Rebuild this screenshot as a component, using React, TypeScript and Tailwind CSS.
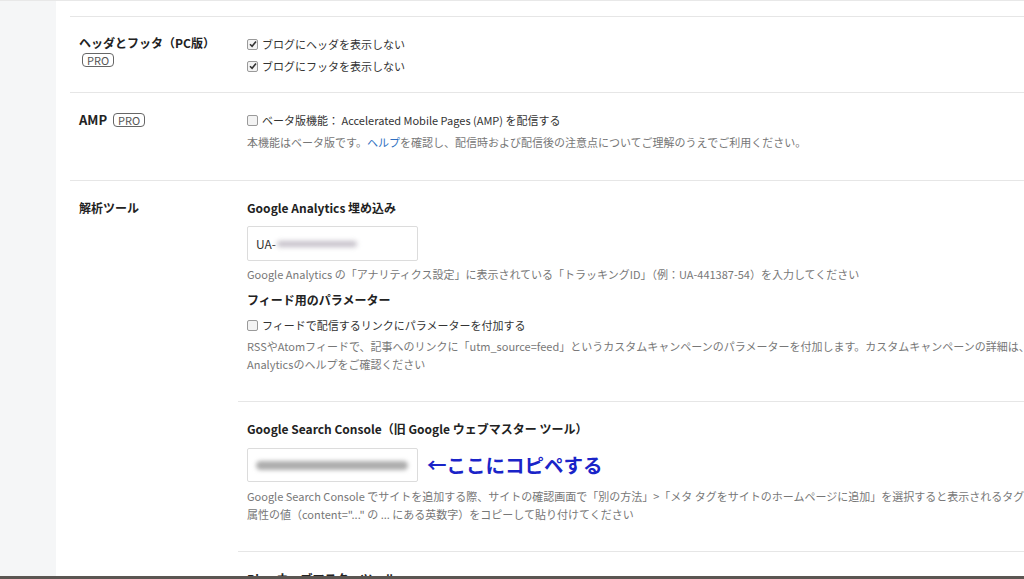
import type { ReactNode } from "react";

const font = { fontFamily: '"Noto Sans CJK JP", "Noto Sans", sans-serif' };

function Check({ checked }: { checked?: boolean }) {
  return (
    <span className="inline-flex w-[11px] h-[11px] mr-[4px] border border-[#9a9a9a] bg-[#f3f3f3] rounded-[2px] items-center justify-center shrink-0">
      {checked && (
        <svg width="8" height="8" viewBox="0 0 8 8">
          <path d="M1 4.2 L3.1 6.3 L7 1.6" fill="none" stroke="#333" strokeWidth="1.6" />
        </svg>
      )}
    </span>
  );
}

function Pro() {
  return (
    <span className="inline-block border border-[#666] rounded-[4px] text-[11px] leading-[12px] text-[#555] px-[4px] font-normal">
      PRO
    </span>
  );
}

function CheckRow({ checked, children }: { checked?: boolean; children: ReactNode }) {
  return (
    <div className="flex items-center h-[22px] text-[11px] text-[#333] whitespace-nowrap">
      <Check checked={checked} />
      <span>{children}</span>
    </div>
  );
}

function Row({ label, children, className = "" }: { label: ReactNode; children: ReactNode; className?: string }) {
  return (
    <div className={`flex border-t border-[#e6e6e6] ${className}`}>
      <div className="w-[168px] shrink-0 pl-[9px] pt-[16px] text-[12px] font-bold text-[#222]">{label}</div>
      <div className="flex-1 min-w-0">{children}</div>
    </div>
  );
}

export default function App() {
  return (
    <div className="w-[1024px] h-[579px] overflow-hidden relative flex bg-white" style={font}>
      <div className="w-[56px] shrink-0 bg-[#f5f6f7] border-t border-[#e8e8e8]" />
      <div className="flex-1 min-w-0 border-t border-[#e8e8e8] pl-[14px]">
        <div className="h-[15px]" />

        <Row
          label={
            <>
              <div className="leading-[20px]">ヘッダとフッタ（PC版）</div>
              <div className="pl-[3px] leading-[14px]">
                <Pro />
              </div>
            </>
          }
          className="h-[76px]"
        >
          <div className="pl-[9px] pt-[16px]">
            <CheckRow checked>ブログにヘッダを表示しない</CheckRow>
            <CheckRow checked>ブログにフッタを表示しない</CheckRow>
          </div>
        </Row>

        <Row
          label={
            <div className="flex items-center gap-[6px] leading-[22px]">
              <span className="text-[13px]">AMP</span>
              <Pro />
            </div>
          }
          className="h-[88px]"
        >
          <div className="pl-[9px] pt-[16px]">
            <CheckRow>ベータ版機能： Accelerated Mobile Pages (AMP) を配信する</CheckRow>
            <p className="text-[11px] leading-[22px] text-[#777] whitespace-nowrap">
              本機能はベータ版です。<span className="text-[#2f6fc0]">ヘルプ</span>を確認し、配信時および配信後の注意点についてご理解のうえでご利用ください。
            </p>
          </div>
        </Row>

        <Row label={<div className="leading-[22px]">解析ツール</div>}>
          <div className="pl-[9px] pt-[16px] pb-[28px]">
            <h3 className="text-[12px] font-bold text-[#222] leading-[22px]">Google Analytics 埋め込み</h3>
            <div className="mt-[7px] w-[171px] h-[35px] border border-[#dcdcdc] rounded-[2px] flex items-center pl-[8px] text-[12px] text-[#333]">
              UA-
              <span className="ml-[1px] w-[80px] h-[6px] rounded-full bg-[#c4bfc8] blur-[2.5px]" />
            </div>
            <p className="mt-[2px] text-[11px] leading-[22px] text-[#777] whitespace-nowrap">
              Google Analytics の「アナリティクス設定」に表示されている「トラッキングID」（例：UA-441387-54）を入力してください
            </p>
            <h3 className="mt-[4px] text-[12px] font-bold text-[#222] leading-[22px]">フィード用のパラメーター</h3>
            <div className="mt-[3px]">
              <CheckRow>フィードで配信するリンクにパラメーターを付加する</CheckRow>
            </div>
            <p className="mt-[1px] text-[11px] leading-[18px] text-[#777] whitespace-nowrap">
              RSSやAtomフィードで、記事へのリンクに「utm_source=feed」というカスタムキャンペーンのパラメーターを付加します。カスタムキャンペーンの詳細は、Google
              <br />
              Analyticsのヘルプをご確認ください
            </p>
          </div>

          <div className="border-t border-[#e6e6e6] pl-[9px] pt-[16px] pb-[28px]">
            <h3 className="text-[12px] font-bold text-[#222] leading-[22px]">Google Search Console（旧 Google ウェブマスター ツール）</h3>
            <div className="mt-[8px] flex items-center">
              <div className="w-[171px] h-[34px] border border-[#dcdcdc] rounded-[2px] flex items-center pl-[8px]">
                <span className="w-[152px] h-[9px] rounded-full bg-[#adadad] blur-[2px]" />
              </div>
              <span className="ml-[9px] text-[19.5px] font-bold text-[#1a24c8] leading-[24px]">←ここにコピペする</span>
            </div>
            <p className="mt-[5px] text-[11px] leading-[18px] text-[#777] whitespace-nowrap">
              Google Search Console でサイトを追加する際、サイトの確認画面で「別の方法」&gt;「メタ タグをサイトのホームページに追加」を選択すると表示されるタグの content
              <br />
              属性の値（content="..." の ... にある英数字）をコピーして貼り付けてください
            </p>
          </div>

          <div className="border-t border-[#e6e6e6] pl-[9px] pt-[16px]">
            <h3 className="text-[12px] font-bold text-[#222] leading-[22px]">Bing ウェブマスターツール</h3>
          </div>
        </Row>
      </div>
      <div className="absolute left-0 right-0 bottom-0 h-[3px] bg-[#5b5652]" />
    </div>
  );
}
